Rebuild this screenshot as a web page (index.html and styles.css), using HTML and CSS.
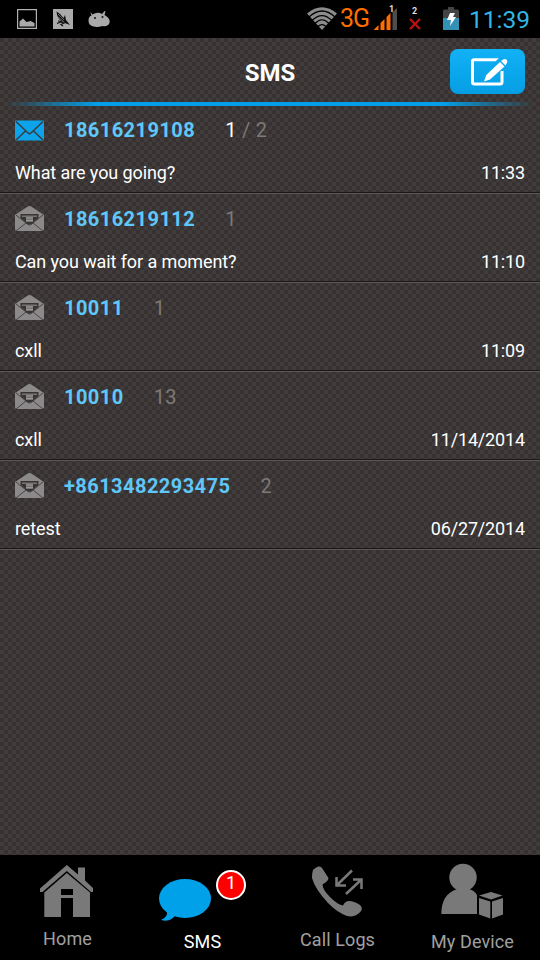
FILE: index.html
```html
<!DOCTYPE html>
<html lang="en">
<head>
<meta charset="utf-8">
<title>SMS</title>
<link rel="stylesheet" href="styles.css">
</head>
<body>
<svg class="defs" width="0" height="0" aria-hidden="true">
  <symbol id="mail-open" viewBox="0 0 29 26">
    <path fill="#8b8989" d="M0 9 12 1q2.500-2 5 0L29 9V23q0 2-2 2H2q-2 0-2-2Z"/>
    <path fill="#383433" d="M5.500 8H23.500V12L18 17q-3.500 3.500-7 0L5.500 12Z"/>
    <path fill="#777474" d="M7 9.500H22V11H7zM11 10h7v6h-7z"/>
    <path fill="#9a9898" d="M11 11.500h7v1h-7zM11 14h7v1h-7z"/>
    <path fill="none" stroke="#484443" stroke-width="1" d="M1 9 11 17 1 25M28 9 18 17l10 8M11 17q3.500 4 7 0"/>
  </symbol>
</svg>
<div class="screen">
  <div class="status">
    <svg class="notes" width="112" height="38" viewBox="0 0 112 38">
      <path fill="none" stroke="#b1b1b1" stroke-width="1.200" d="M17.600 9.600H36.400V28.400H17.600Z"/>
      <path fill="#aaa" d="M19.500 26.500v-5l3.500-3 3.500 3.500 4-1 4 2v3.500z"/>
      <path fill="#aaa" d="M53 9h20v20H53z"/>
      <path fill="#111" d="M56.500 11.500q4 2 7 6.500l1.500-3 1 5 4 5-4-1.500-4-2q-5-3-5.500-10z"/>
      <path fill="none" stroke="#111" stroke-width="1.200" d="M57 23.500l4-1.500 3 1-3 1.500 2 1.500M58 21l4 .500"/>
      <path fill="none" stroke="#aaa" stroke-width=".6" d="M58 14l6 6M58 17l6 5"/>
      <path fill="#aaa" d="M90.500 12l2 2.500q5-3 9.500-.500l2.500-3 1 .600-1 3.400q6 3 5 8-2 4-7 3-5 1.500-9 .500-5-1-5-6 0-4 3-5l-1-3z"/>
      <circle cx="95" cy="18" r="1" fill="#111"/><circle cx="102.500" cy="17" r="1" fill="#111"/>
    </svg>
    <svg class="wifi" width="32" height="38" viewBox="0 0 32 38">
      <path fill="#8c8c8c" d="M1 13.500Q16 1 31 13.500L16 30Z"/>
      <path fill="none" stroke="#000" stroke-width="1.200" d="M3 17Q16 5 29 17M6 20.500Q16 10.500 26 20.500M9 23.500Q16 16 23 23.500M12 26.500q4-4 8 0"/>
    </svg>
    <span class="net">3G</span>
    <svg class="signal" width="94" height="38" viewBox="372 0 94 38">
      <path fill="#ff6d00" d="M373.500 30l5-5v5zM380.500 30v-7l4-4v11zM386.500 30V17l4-4v17z"/>
      <path fill="#4d4d4d" d="M392.500 30V12l4.500-4v22z"/>
      <path stroke="#b11" stroke-width="2.400" d="M410 19l10 10M420 19l-10 10"/>
      <path fill="#444" d="M443 11q0-1.500 2-1.500h3V7h6v2.500h3q2 0 2 1.500v8h-16z"/>
      <path fill="#3391b5" d="M443 18h16v12h-16z"/>
      <path fill="#fff" d="M450 13h5l-2 4h3l-6 9 1-6h-4z"/>
      <text x="389" y="12" class="sim">1</text><text x="412" y="14" class="sim">2</text>
    </svg>
    <span class="clock">11:39</span>
  </div>
  <header class="header">
    <h1>SMS</h1>
    <button class="compose" aria-label="Compose">
      <svg width="40" height="30" viewBox="0 0 40 30">
        <path fill="none" stroke="#fff" stroke-width="3" d="M31.500 2.700H5Q3.500 2.700 3.500 4.500V25Q3.500 27 5.500 27H31Q33 27 33 25V14"/>
        <path fill="#0da8ee" d="M13 25 17 14 31 0 40 3 37 9 22 23Z"/>
        <path fill="#fff" d="M15 24.500 17.300 18 31 5 35.500 9.500 21 22.500ZM32 4 34.500 2.300q1.700-1 3.200.5 1.600 1.600 0 3.400L36.500 8.500Z"/>
      </svg>
    </button>
  </header>
  <div class="accent"></div>
  <main class="list">
    <article class="row first">
      <div class="top">
        <svg class="mail" width="29" height="26" viewBox="0 0 29 26">
          <path fill="#0ca3ea" d="M1 3.500H28q1 0 1 1V22q0 1.500-1 1.500H1q-1 0-1-1.500V4.500q0-1 1-1Z"/>
          <path fill="none" stroke="#343d43" stroke-width="1.500" d="M1 4.500 13 16q1.500 1.500 3 0L28 4.500M1 23 10.500 14M28 23 18.500 14"/>
        </svg>
        <span class="number">18616219108</span><span class="count"><b>1</b> / 2</span>
      </div>
      <div class="bottom"><span>What are you going?</span><time>11:33</time></div>
    </article>
    <article class="row">
      <div class="top"><svg class="mail" width="29" height="26"><use href="#mail-open"/></svg><span class="number">18616219112</span><span class="count">1</span></div>
      <div class="bottom"><span>Can you wait for a moment?</span><time>11:10</time></div>
    </article>
    <article class="row">
      <div class="top"><svg class="mail" width="29" height="26"><use href="#mail-open"/></svg><span class="number">10011</span><span class="count">1</span></div>
      <div class="bottom"><span>cxll</span><time>11:09</time></div>
    </article>
    <article class="row">
      <div class="top"><svg class="mail" width="29" height="26"><use href="#mail-open"/></svg><span class="number">10010</span><span class="count">13</span></div>
      <div class="bottom"><span>cxll</span><time>11/14/2014</time></div>
    </article>
    <article class="row">
      <div class="top"><svg class="mail" width="29" height="26"><use href="#mail-open"/></svg><span class="number">+8613482293475</span><span class="count">2</span></div>
      <div class="bottom"><span>retest</span><time>06/27/2014</time></div>
    </article>
  </main>
  <nav class="tabs">
    <a class="tab home">
      <svg width="135" height="70" viewBox="0 855 135 70">
        <path fill="#797979" d="M40 888.500 66.800 865 78 874.500V867.500h7v13l8 7.500v4h-2L66.800 871 42.500 892H40Z"/>
        <path fill="#797979" fill-rule="evenodd" d="M44.300 892.500 66.800 873 90 892.500V917H73V898H61V917H44.300ZM61 889v6h12v-6Z"/>
      </svg><span>Home</span>
    </a>
    <a class="tab sms">
      <svg width="135" height="70" viewBox="135 855 135 70">
        <ellipse cx="185" cy="898.500" rx="26" ry="19.500" fill="#00a1e9"/>
        <path fill="#00a1e9" d="M167 911q1 6-6 9 10 3 15-6z"/>
        <circle cx="231" cy="885" r="14" fill="#f00" stroke="#fff" stroke-width="2"/>
        <text x="231" y="889" text-anchor="middle" class="badge">1</text>
      </svg><span>SMS</span>
    </a>
    <a class="tab calls">
      <svg width="135" height="70" viewBox="270 855 135 70">
        <path fill="#797979" d="M313 870q4-4 6.500-3.500 2 0 3.500 3l5.500 8.500q0 3-6 6.500 0 5 7 12 7 7.500 13.500 9 2-4.500 6-4.500 5 0 11 4 3 3 1 6-5 7-14 5-9-3-19-13-13-14-16-25 0-5 1-8Z"/>
        <path fill="none" stroke="#797979" stroke-width="2.500" d="M352 870.500 336 886M336.500 877V885.500H346M346 894 362 879M353 879.500h8.500V889"/>
      </svg><span>Call Logs</span>
    </a>
    <a class="tab device">
      <svg width="135" height="70" viewBox="405 855 135 70">
        <circle cx="463" cy="877.500" r="13.700" fill="#797979"/>
        <path fill="#797979" d="M441.300 914q0-20 16-25h11q6 1 8.700 6v19ZM479 895.500l12-3.500 11.500 3.500-11.500 4ZM479 898l11.300 3.500v17L479 914.500ZM492 901.500l11-3.500v16.500l-11 4Z"/>
      </svg><span>My Device</span>
    </a>
  </nav>
</div>
</body>
</html>
```
FILE: styles.css
```css
* { box-sizing: border-box; }
body { margin: 0; background: #000; font-family: Roboto, "Liberation Sans", sans-serif; color: #fff; }
.defs { display: block; height: 0; }
.screen {
  width: 540px; height: 960px; display: flex; flex-direction: column;
  background: repeating-conic-gradient(#373231 0 25%, #403c3b 0 50%) 0 2px / 8px 8px;
}
.status { height: 38px; background: #000; display: flex; align-items: center; }
.wifi { margin-left: 194px; }
.net { width: 32px; margin-left: 2px; font-size: 25px; line-height: 40px; color: #ff6d00; letter-spacing: -1px; }
.signal { display: block; }
.sim { font: bold 9px Roboto, sans-serif; fill: #ddd; }
.clock { margin-left: 3px; color: #33b5e5; font-size: 24.500px; line-height: 38px; padding-top: 2px; }
.header { height: 64px; display: grid; grid-template-columns: 1fr 75px; padding: 11px 15px 8px 90px; }
h1 { margin: 0; font-size: 24px; line-height: 48px; font-weight: 700; text-align: center; }
.compose {
  border: 0; padding: 0; width: 75px; height: 45px; border-radius: 8px;
  background: linear-gradient(#12b1f6, #049ee4); display: flex; align-items: center; justify-content: center;
}
.compose svg { margin-left: 3px; }
.accent { height: 4px; background: linear-gradient(90deg, transparent 1%, #049fe6 18%, #049fe6 82%, transparent 99%); }
.list { flex: 1; }
.row { height: 89px; padding: 12px 15px 0; border-bottom: 1px solid #5b5757; box-shadow: inset 0 -1px #1b1817; }
.row.first { height: 88px; padding-top: 11px; }
.top { height: 26px; display: flex; align-items: center; }
.mail { width: 29px; margin-right: 20px; }
.number { font-size: 20px; font-weight: 700; color: #5fc8fa; letter-spacing: .45px; }
.count { margin-left: 30px; font-size: 20px; color: #7c7978; letter-spacing: .3px; }
.count b { color: #fff; font-weight: 400; }
.bottom { display: flex; justify-content: space-between; margin-top: 18px; font-size: 18px; line-height: 24px; letter-spacing: -.1px; }
.bottom time { letter-spacing: -.15px; }
.tabs { height: 105px; background: #000; display: grid; grid-template-columns: repeat(4, 135px); }
.tab { text-align: center; color: #a0a0a0; font-size: 18px; }
.tab svg { display: block; }
.tab span { display: block; line-height: 24px; letter-spacing: .1px; margin-top: 2px; }
.tab.sms span { color: #fff; margin-top: 5px; }
.tab.calls span { margin-top: 3px; }
.tab.device span { margin-top: 5px; }
.badge { font: 18px Roboto, sans-serif; fill: #fff; }
```
